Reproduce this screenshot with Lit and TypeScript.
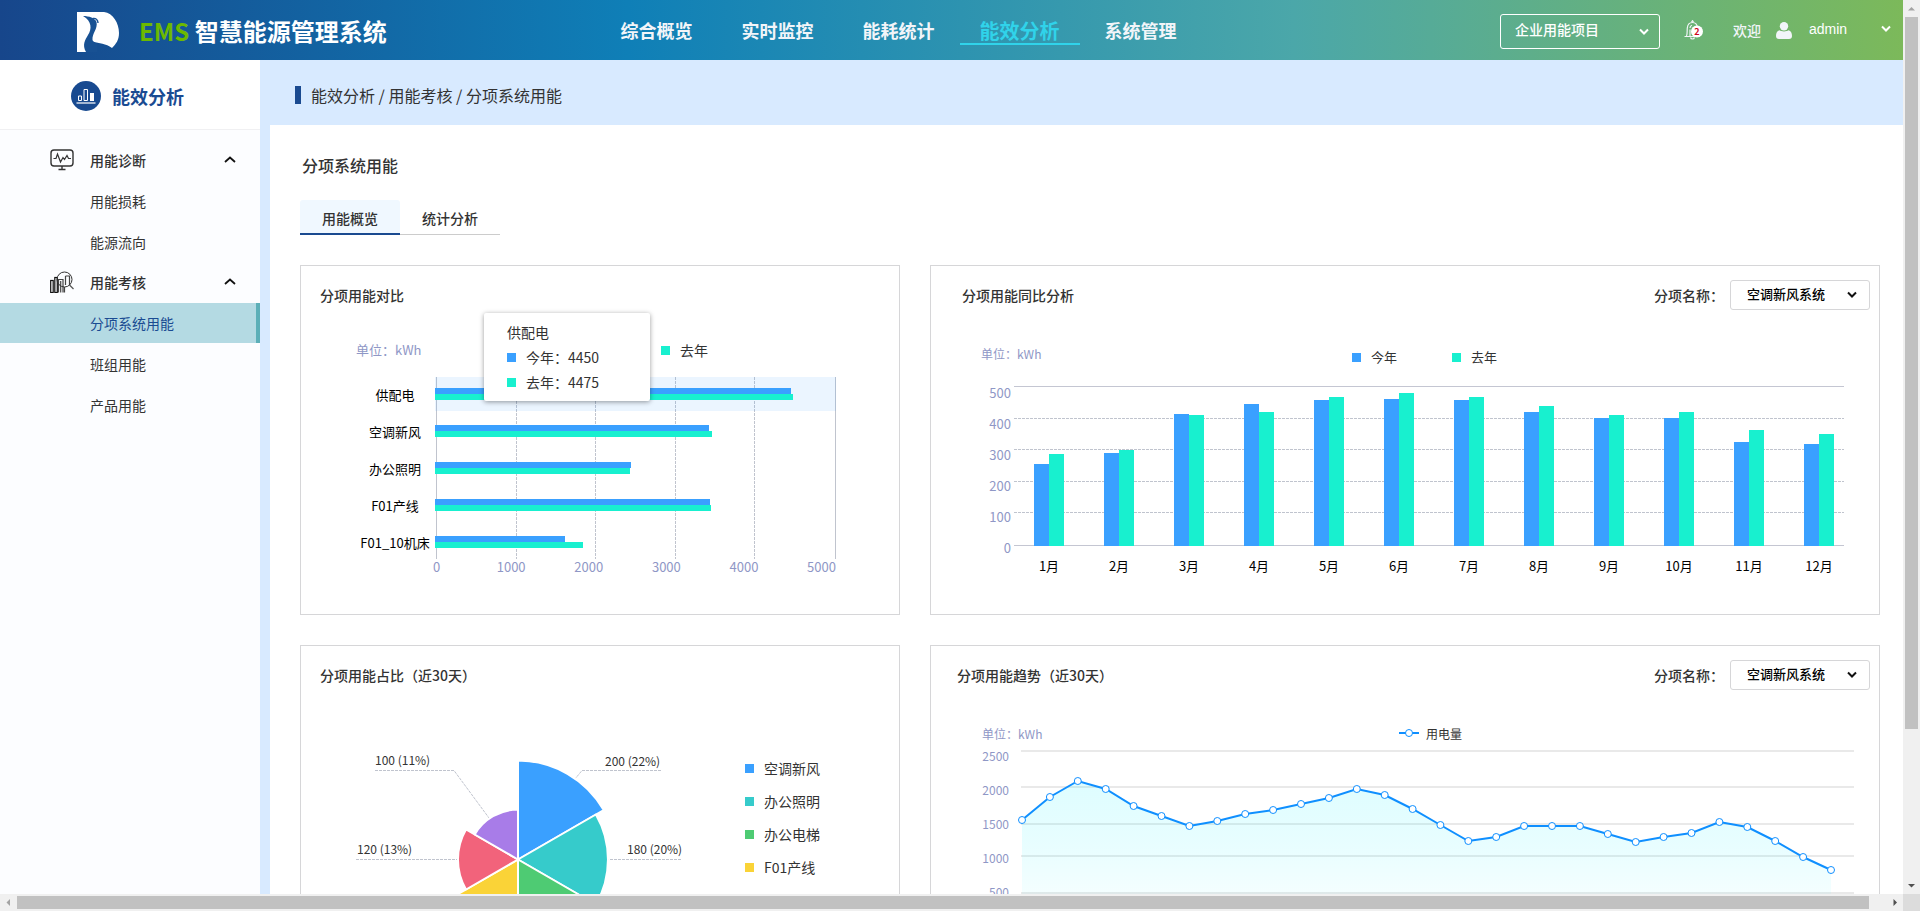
import { LitElement, html, svg, css } from "lit";
import { customElement, property } from "lit/decorators.js";
import { classMap } from "lit/directives/class-map.js";

const base = css`
  * {
    box-sizing: border-box;
  }
  ul,
  ol,
  h1,
  h2,
  p {
    margin: 0;
    padding: 0;
    list-style: none;
    font-size: inherit;
    font-weight: inherit;
  }
  a {
    color: inherit;
    text-decoration: none;
  }
  button,
  select {
    font: inherit;
    color: inherit;
    background: none;
    border: 0;
    margin: 0;
    padding: 0;
    cursor: pointer;
  }
  svg {
    display: block;
    flex: none;
  }
  .swatch {
    width: 9px;
    height: 9px;
    flex: none;
  }
  .swatch.now,
  .bar.now {
    background: #3aa0ff;
  }
  .swatch.last,
  .bar.last {
    background: #18f0cf;
  }
`;

/* ---------- header ---------- */

@customElement("app-header")
class AppHeader extends LitElement {
  static styles = [
    base,
    css`
      :host {
        display: grid;
        grid-template-columns: 596fr 605fr 702fr;
        align-items: center;
        height: 60px;
        color: #f2f5f9;
        background: linear-gradient(90deg, #17468b 0%, #0f7fb7 33%, #4ba7a9 68%, #7cb95a 100%);
      }
      .brand {
        display: flex;
        align-items: center;
        gap: 20px;
        padding: 4px 0 0 77px;
      }
      .name {
        font-size: 24px;
        line-height: 36px;
        font-weight: 700;
        color: #fff;
        white-space: nowrap;
        padding-bottom: 2px;
      }
      .ems {
        color: #6cb900;
      }
      .nav {
        display: grid;
        grid-template-columns: repeat(5, 1fr);
      }
      .nav a {
        justify-self: center;
        width: 120px;
        height: 30px;
        text-align: center;
        font-size: 18px;
        font-weight: 700;
        border-bottom: 2px solid transparent;
        line-height: 30px;
      }
      .nav a.on {
        font-size: 20px;
        line-height: 32px;
        color: #30d3ea;
        border-color: #30d3ea;
      }
      .tools {
        display: flex;
        align-items: center;
        justify-content: flex-end;
        padding-right: 11px;
        font-size: 14px;
        line-height: 20px;
      }
      .project {
        display: grid;
        align-items: center;
        width: 160px;
        margin: 3px 24px 0 0;
      }
      .project select,
      .project svg {
        grid-area: 1 / 1;
      }
      .project select {
        appearance: none;
        height: 35px;
        padding: 0 30px 5px 14px;
        border: 1px solid #fff;
        border-radius: 3px;
        font-weight: 500;
        color: #fff;
      }
      .project svg {
        justify-self: end;
        margin-right: 10px;
        pointer-events: none;
      }
      .welcome {
        margin: 0 15px 0 30px;
        font-weight: 500;
      }
      .user {
        display: flex;
        align-items: center;
        justify-content: space-between;
        width: 83px;
        margin-left: 17px;
        padding-bottom: 2px;
        font-family: "Liberation Sans", sans-serif;
        font-size: 14px;
        color: #fff;
      }
    `,
  ];

  private items = ["综合概览", "实时监控", "能耗统计", "能效分析", "系统管理"];

  private chevron() {
    return html`<svg width="12" height="8" viewBox="0 0 12 8" fill="none" stroke="#fff" stroke-width="2">
      <path d="M2 1.5 6 5.5 10 1.5" />
    </svg>`;
  }

  render() {
    return html`
      <div class="brand">
        <svg width="42" height="40" viewBox="0 0 42 40">
          <path fill="#fff" d="M0 0H27C36 1 42 11 42 21C42 28 39 32 35 36C29 31 22 32 16 29.5L9 40H0Z" />
          <path
            fill="#185193"
            d="M6 4C12 4 18 6 19.5 10C21 17 15 21 15.5 28C16 30 18 31 20 31.5L20 40H9C5 33 8 28 11 23C15 17 15 9 6 4Z"
          />
          <path fill="none" stroke="#185193" stroke-width="1.4" d="M16 6.5C19 6 21 8 21 11" />
        </svg>
        <h1 class="name"><span class="ems">EMS</span> 智慧能源管理系统</h1>
      </div>
      <nav class="nav">
        ${this.items.map((t, i) => html`<a href="#" class=${classMap({ on: i === 3 })}>${t}</a>`)}
      </nav>
      <div class="tools">
        <div class="project">
          <select aria-label="项目">
            <option>企业用能项目</option>
          </select>
          ${this.chevron()}
        </div>
        <button aria-label="消息">
          <svg width="19" height="20" viewBox="0 0 19 20">
            <g fill="none" stroke="#f2f5f9" stroke-width="1.2">
              <path d="M.5 16.5H16M2.5 16C3.5 14 3 11 3.3 8C3.6 4.5 6 2.5 8.5 2.5S13.2 4.5 13.5 8V16M6 8C6 6.500 7 5.500 8 5.200M6 16V9.500" />
              <path d="M6.500 17.500C7 19.500 10 19.500 10.500 17.500M7.500 2 8.500 .7 9.500 2" />
            </g>
            <circle cx="13" cy="11.500" r="6" fill="#fff" />
            <text x="13" y="14.500" font-size="9" font-weight="700" fill="#d0021b" text-anchor="middle">2</text>
          </svg>
        </button>
        <span class="welcome">欢迎</span>
        <svg width="16" height="17" viewBox="0 0 16 17" fill="#f2f5f9">
          <circle cx="8" cy="4.200" r="4.200" />
          <path d="M3.500 8.300C5 9.800 11 9.800 12.500 8.300C15 9 16 11 16 14C16 16 15 17 13 17H3C1 17 0 16 0 14C0 11 1 9 3.500 8.300Z" />
        </svg>
        <button class="user"><span>admin</span>${this.chevron()}</button>
      </div>
    `;
  }
}

/* ---------- sidebar ---------- */

@customElement("side-menu")
class SideMenu extends LitElement {
  static styles = [
    base,
    css`
      :host {
        display: block;
        background: #fcfdff;
        color: #333;
        font-size: 14px;
      }
      .title {
        display: flex;
        align-items: center;
        gap: 11px;
        height: 70px;
        padding: 2px 0 0 71px;
        background: #fff;
        border-bottom: 1px solid #f0f0f2;
        font-size: 18px;
        font-weight: 700;
        color: #1a4b92;
      }
      .menu {
        padding-top: 10px;
      }
      .group {
        display: grid;
        grid-template-columns: 40px 1fr 12px;
        align-items: center;
        width: 100%;
        height: 40px;
        padding: 0 24px 0 50px;
        text-align: left;
        font-weight: 500;
      }
      .leaf {
        display: block;
        height: 40px;
        margin-top: 1px;
        padding-left: 90px;
        line-height: 40px;
      }
      .leaf.on {
        background: #b4dae3;
        border-right: 4px solid #5cafb8;
        color: #1a4b92;
      }
    `,
  ];

  private monitor = html`<svg width="24" height="22" viewBox="0 0 24 22" fill="none" stroke="#333" stroke-width="1.4">
    <rect x="1" y="1" width="22" height="16" rx="3" />
    <path d="M12 17V20.500M8.500 20.500H15.500" />
    <path d="M3.500 9.500H6L7.500 5 10.500 13 13 8.500 14.500 10.500 17 6.500 18.500 9.500H21" stroke-width="1.200" />
  </svg>`;

  private assess = html`<svg width="24" height="22" viewBox="0 0 24 22" fill="none" stroke="#111" stroke-width="1.200">
    <rect x=".7" y="9.500" width="2.500" height="12" />
    <rect x="4.800" y="6.500" width="2.500" height="15" />
    <path d="M8.500 21.500V8.500H13V21.500M10.700 10V21.500M14.500 21.500V16M15.500 5V14M15.500 5H19.500V14" stroke="#444" />
    <circle cx="14.500" cy="8.500" r="7.500" stroke="#333" stroke-width="1" />
    <path d="M19.500 14 23.500 18" stroke="#555" />
  </svg>`;

  private groups = [
    { name: "用能诊断", icon: this.monitor, items: ["用能损耗", "能源流向"] },
    { name: "用能考核", icon: this.assess, items: ["分项系统用能", "班组用能", "产品用能"] },
  ];

  render() {
    return html`
      <div class="title">
        <svg width="30" height="30" viewBox="0 0 30 30">
          <circle cx="15" cy="15" r="15" fill="#184a90" />
          <path d="M7.500 19.500V15H10.500V19.500ZM13 19.500V8.500H16.500V19.500Z" fill="none" stroke="#fff" />
          <rect x="19" y="12" width="4" height="8" fill="#fff" />
          <rect x="5.500" y="21" width="19" height="2" fill="#a3b7d3" />
        </svg>
        能效分析
      </div>
      <nav class="menu">
        ${this.groups.map(
          (g) => html`
            <button class="group" aria-expanded="true">
              ${g.icon}<span>${g.name}</span>
              <svg width="12" height="8" viewBox="0 0 12 8" fill="none" stroke="#111" stroke-width="1.800">
                <path d="M1 6 6 1.500 11 6" />
              </svg>
            </button>
            <ul>
              ${g.items.map(
                (t) => html`<li><a href="#" class=${classMap({ leaf: true, on: t === "分项系统用能" })}>${t}</a></li>`
              )}
            </ul>
          `
        )}
      </nav>
    `;
  }
}

/* ---------- card frame ---------- */

@customElement("chart-card")
class ChartCard extends LitElement {
  static styles = [
    base,
    css`
      :host {
        display: block;
        position: relative;
        min-height: 350px;
        border: 1px solid #d6d6d8;
        background: #fff;
      }
      .head {
        display: flex;
        align-items: center;
        height: 44px;
        padding: 14px 9px 0 19px;
        font-size: 14px;
        font-weight: 500;
        color: #333;
      }
      .head.wide {
        padding-left: 31px;
      }
      .head.mid {
        padding-left: 26px;
      }
      .head h2 {
        flex: 1;
      }
      .head label {
        margin-right: 6px;
      }
      .pick {
        display: grid;
        align-items: center;
        width: 140px;
      }
      .pick select,
      .pick svg {
        grid-area: 1 / 1;
      }
      .pick select {
        appearance: none;
        height: 30px;
        padding: 0 28px 3px 16px;
        border: 1px solid #d6d6d8;
        border-radius: 3px;
        font-size: 13px;
        font-weight: 500;
        color: #000;
      }
      .pick svg {
        justify-self: end;
        margin-right: 12px;
        pointer-events: none;
      }
    `,
  ];

  @property() heading = "";
  @property() inset = "";
  @property({ type: Boolean }) filter = false;

  render() {
    return html`
      <div class=${classMap({ head: true, wide: this.inset === "wide", mid: this.inset === "mid" })}>
        <h2>${this.heading}</h2>
        ${this.filter
          ? html`<label for="item">分项名称：</label>
              <div class="pick">
                <select id="item">
                  <option>空调新风系统</option>
                </select>
                <svg width="12" height="8" viewBox="0 0 12 8" fill="none" stroke="#111" stroke-width="2">
                  <path d="M2 1.500 6 5.500 10 1.500" />
                </svg>
              </div>`
          : ""}
      </div>
      <slot></slot>
    `;
  }
}

/* ---------- horizontal comparison ---------- */

@customElement("compare-chart")
class CompareChart extends LitElement {
  static styles = [
    base,
    css`
      :host {
        display: block;
        padding: 30px 63px 0 54px;
        font-size: 14px;
        color: #333;
      }
      .top {
        display: grid;
        grid-template-columns: 305px 100px;
        padding-left: 1px;
        line-height: 20px;
      }
      .unit {
        font-size: 13px;
        color: #8f97c6;
      }
      .key {
        display: flex;
        align-items: center;
        gap: 10px;
      }
      .chart {
        display: grid;
        grid-template-columns: 80px 1fr;
        margin-top: 17px;
      }
      .names,
      .rows {
        display: grid;
        gap: 3px;
      }
      .names li {
        height: 34px;
        line-height: 35px;
        text-align: center;
        font-size: 13px;
        color: #000;
        white-space: nowrap;
      }
      .plot {
        display: grid;
      }
      .rows,
      .lines {
        grid-area: 1 / 1;
      }
      .lines {
        display: grid;
        grid-template-columns: repeat(5, 1fr);
        margin-left: 1px;
        border-left: 1px solid #c0c4ce;
        border-right: 1px solid #c0c4ce;
      }
      .lines i:not(:last-child) {
        background: repeating-linear-gradient(#c0c4ce 0 3px, transparent 3px 4px) right / 1px 100% no-repeat;
      }
      .row {
        height: 34px;
        padding: 11px 0;
      }
      .row.hover {
        background: rgba(58, 160, 255, 0.1);
      }
      .bar {
        height: 6px;
      }
      .axis {
        grid-column: 2;
        display: grid;
        grid-template-columns: 15px repeat(5, 1fr);
        margin-left: -2px;
        line-height: 16px;
        font-size: 13px;
        color: #8f97c6;
      }
      .axis li:not(:first-child) {
        text-align: right;
      }
      .tip {
        position: absolute;
        left: 183px;
        top: 47px;
        width: 166px;
        padding: 7px 23px 6px;
        background: #fff;
        border-radius: 2px;
        box-shadow: 0 1px 5px rgba(0, 0, 0, 0.4);
        line-height: 25px;
      }
    `,
  ];

  private data = [
    { name: "供配电", now: 356, last: 358 },
    { name: "空调新风", now: 274, last: 277 },
    { name: "办公照明", now: 196, last: 195 },
    { name: "F01产线", now: 275, last: 276 },
    { name: "F01_10机床", now: 130, last: 148 },
  ];

  render() {
    const pct = (v: number) => `width:${(v / 401) * 100}%`;
    return html`
      <div class="top">
        <span class="unit">单位：kWh</span>
        <span class="key"><i class="swatch last"></i>去年</span>
      </div>
      <div class="chart">
        <ul class="names">
          ${this.data.map((d) => html`<li>${d.name}</li>`)}
        </ul>
        <div class="plot">
          <div class="lines"><i></i><i></i><i></i><i></i><i></i></div>
          <div class="rows">
            ${this.data.map(
              (d, i) => html`<div class=${classMap({ row: true, hover: i === 0 })}>
                <div class="bar now" style=${pct(d.now)}></div>
                <div class="bar last" style=${pct(d.last)}></div>
              </div>`
            )}
          </div>
        </div>
        <ul class="axis">
          ${[0, 1000, 2000, 3000, 4000, 5000].map((n) => html`<li>${n}</li>`)}
        </ul>
      </div>
      <div class="tip">
        <p>供配电</p>
        <p class="key"><i class="swatch now"></i>今年：4450</p>
        <p class="key"><i class="swatch last"></i>去年：4475</p>
      </div>
    `;
  }
}

/* ---------- monthly columns ---------- */

@customElement("month-chart")
class MonthChart extends LitElement {
  static styles = [
    base,
    css`
      :host {
        display: block;
        padding-top: 34px;
        color: #333;
      }
      .top {
        display: grid;
        grid-template-columns: 371fr 100px 100px 327fr;
        height: 23px;
        padding-left: 50px;
        line-height: 20px;
      }
      .unit {
        font-size: 12px;
        color: #8f97c6;
      }
      .key {
        display: flex;
        align-items: center;
        align-self: end;
        gap: 10px;
        font-size: 13px;
      }
      .chart {
        display: grid;
        grid-template-columns: 30px 1fr;
        column-gap: 3px;
        margin-top: 19px;
        padding: 0 35px 0 50px;
      }
      .scale {
        grid-row: 1 / 3;
        margin-top: -9px;
        text-align: right;
        font-size: 13px;
        line-height: 31px;
        color: #8f97c6;
      }
      .plot {
        display: grid;
        height: 160px;
      }
      .lines,
      .cols {
        grid-area: 1 / 1;
      }
      .lines {
        display: grid;
        grid-template-rows: repeat(5, 1fr);
        border-top: 1px solid #c4c6d2;
        border-bottom: 1px solid #c4c6d2;
      }
      .lines i:not(:last-child) {
        background: repeating-linear-gradient(90deg, #c0c4ce 0 3px, transparent 3px 4px) bottom / 100% 1px no-repeat;
      }
      .cols,
      .months {
        display: flex;
        justify-content: space-between;
        padding: 0 10px 0 20px;
      }
      .col {
        display: flex;
        align-items: flex-end;
        width: 30px;
      }
      .bar {
        flex: 1;
      }
      .months {
        grid-column: 2;
        margin-top: 10px;
        font-size: 13px;
        line-height: 20px;
        color: #000;
      }
      .months li {
        width: 30px;
        text-align: center;
        white-space: nowrap;
      }
    `,
  ];

  private data = [
    [82, 92],
    [93, 96],
    [132, 131],
    [142, 134],
    [146, 149],
    [147, 153],
    [146, 149],
    [134, 140],
    [128, 131],
    [128, 134],
    [104, 116],
    [102, 112],
  ];

  render() {
    const pct = (v: number) => `height:${(v / 160) * 100}%`;
    return html`
      <div class="top">
        <span class="unit">单位：kWh</span>
        <span class="key"><i class="swatch now"></i>今年</span>
        <span class="key"><i class="swatch last"></i>去年</span>
      </div>
      <div class="chart">
        <ul class="scale">
          ${[500, 400, 300, 200, 100, 0].map((n) => html`<li>${n}</li>`)}
        </ul>
        <div class="plot">
          <div class="lines"><i></i><i></i><i></i><i></i><i></i></div>
          <div class="cols">
            ${this.data.map(
              ([a, b]) => html`<div class="col">
                <div class="bar now" style=${pct(a)}></div>
                <div class="bar last" style=${pct(b)}></div>
              </div>`
            )}
          </div>
        </div>
        <ul class="months">
          ${this.data.map((_, i) => html`<li>${i + 1}月</li>`)}
        </ul>
      </div>
    `;
  }
}

/* ---------- rose chart ---------- */

@customElement("share-chart")
class ShareChart extends LitElement {
  static styles = [
    base,
    css`
      :host {
        display: flex;
        gap: 25px;
        padding: 40px 0 0 19px;
        color: #333;
      }
      .rose text {
        font-size: 12px;
        fill: #333;
      }
      .lead {
        fill: none;
        stroke: #c0c4ce;
        stroke-dasharray: 3 1;
      }
      .slice {
        stroke: #fff;
        stroke-width: 2;
      }
      .legend {
        padding-top: 22px;
        font-size: 14px;
        line-height: 33px;
      }
      .legend li {
        display: flex;
        align-items: center;
        gap: 10px;
      }
      .c0 {
        background: #3aa0ff;
        fill: #3aa0ff;
      }
      .c1 {
        background: #36cbcb;
        fill: #36cbcb;
      }
      .c2 {
        background: #4ecb73;
        fill: #4ecb73;
      }
      .c3 {
        background: #fad337;
        fill: #fad337;
      }
      .c4 {
        background: #f2637b;
        fill: #f2637b;
      }
      .c5 {
        background: #a87ce8;
        fill: #a87ce8;
      }
    `,
  ];

  private radii = [99, 90, 80, 70, 60, 50];
  private names = ["空调新风", "办公照明", "办公电梯", "F01产线"];

  private slice(r: number, i: number) {
    const at = (deg: number) => {
      const a = (deg * Math.PI) / 180;
      return `${(198 + r * Math.sin(a)).toFixed(1)} ${(129.5 - r * Math.cos(a)).toFixed(1)}`;
    };
    return svg`<path class="slice c${i}" d="M198 129.5L${at(i * 60)}A${r} ${r} 0 0 1 ${at(i * 60 + 60)}Z" />`;
  }

  render() {
    return html`
      <svg class="rose" width="400" height="230" viewBox="0 0 400 230">
        <path class="lead" d="M55 40.500H134L169 88" />
        <path class="lead" d="M341 40.500H262L255 49" />
        <path class="lead" d="M36 129.500H140M286 129.500H362" />
        ${this.radii.map((r, i) => this.slice(r, i))}
        <text x="55" y="35">100 (11%)</text>
        <text x="285" y="36">200 (22%)</text>
        <text x="37" y="124">120 (13%)</text>
        <text x="307" y="124">180 (20%)</text>
      </svg>
      <ul class="legend">
        ${this.names.map((n, i) => html`<li><i class="swatch c${i}"></i>${n}</li>`)}
      </ul>
    `;
  }
}

/* ---------- trend line ---------- */

@customElement("trend-chart")
class TrendChart extends LitElement {
  static styles = [
    base,
    css`
      :host {
        display: block;
        padding: 34px 25px 0 51px;
        font-size: 12px;
        color: #333;
      }
      .top {
        display: grid;
        grid-template-columns: 417fr 455fr;
        line-height: 20px;
      }
      .unit,
      .scale {
        color: #8f97c6;
      }
      .key {
        display: flex;
        align-items: center;
        gap: 7px;
      }
      .chart {
        display: grid;
        grid-template-columns: 27px 1fr;
        column-gap: 5px;
      }
      .scale {
        margin-top: -5px;
        text-align: right;
        line-height: 34px;
      }
      .plot {
        width: 100%;
        height: auto;
      }
      .rule {
        stroke: #e9e9e9;
        stroke-width: 2;
      }
      .line {
        fill: none;
        stroke: #0f8fff;
        stroke-width: 2;
      }
      .dot {
        fill: #fff;
        stroke: #0f8fff;
        stroke-width: 1;
      }
    `,
  ];

  private ys = [
    820, 797, 781, 789, 806, 816, 826, 821, 814, 810, 804, 798, 789, 795, 809, 825, 841, 837, 826, 826, 826, 834, 842,
    837, 833, 822, 827, 841, 857, 870,
  ];

  render() {
    const pts = this.ys.map((y, i) => [8 + (i * 809) / 29, y - 744]);
    const line = pts.map(([x, y]) => `${x.toFixed(1)},${y}`).join(" ");
    return html`
      <div class="top">
        <span class="unit">单位：kWh</span>
        <span class="key">
          <svg width="20" height="10" viewBox="0 0 20 10">
            <path class="line" d="M0 4H20" />
            <circle class="dot" cx="10" cy="4" r="3.500" />
          </svg>
          用电量
        </span>
      </div>
      <div class="chart">
        <ul class="scale">
          ${[2500, 2000, 1500, 1000, 500].map((n) => html`<li>${n}</li>`)}
        </ul>
        <svg class="plot" viewBox="0 0 840 190">
          <defs>
            <linearGradient id="fade" x1="0" y1="0" x2="0" y2="1">
              <stop offset="0" stop-color="#00f0ff" stop-opacity=".13" />
              <stop offset=".45" stop-color="#00f0ff" stop-opacity=".09" />
              <stop offset="1" stop-color="#00f0ff" stop-opacity=".01" />
            </linearGradient>
          </defs>
          ${[7, 43, 80, 112, 149, 184].map((y) => svg`<path class="rule" d="M7 ${y}H840" />`)}
          <polygon fill="url(#fade)" points="8,184 ${line} 817,184" />
          <polyline class="line" points=${line} />
          ${pts.map(([x, y]) => svg`<circle class="dot" cx=${x.toFixed(1)} cy=${y} r="3.5" />`)}
        </svg>
      </div>
    `;
  }
}

/* ---------- page ---------- */

@customElement("app-root")
class AppRoot extends LitElement {
  static styles = [
    base,
    css`
      :host {
        display: grid;
        grid-template: minmax(0, 1fr) 17px / minmax(0, 1fr) 17px;
        height: 100vh;
        font-family: "Noto Sans CJK SC", "Noto Sans", sans-serif;
        color: #333;
        background: #fff;
      }
      .view {
        overflow: auto;
        scrollbar-width: none;
      }
      .body {
        display: grid;
        grid-template-columns: 260px minmax(0, 1fr);
        background: #d8eaff;
      }
      .crumbs {
        display: flex;
        align-items: center;
        gap: 10px;
        height: 65px;
        padding: 5px 0 0 35px;
        font-size: 16px;
        line-height: 20px;
      }
      .crumbs::before {
        content: "";
        width: 6px;
        height: 18px;
        background: #1a4a90;
      }
      .page {
        margin-left: 10px;
        padding: 30px 23px 30px 30px;
        background: #fff;
      }
      .page h1 {
        padding-left: 2px;
        font-size: 16px;
        font-weight: 500;
        line-height: 20px;
      }
      .tabs {
        display: flex;
        margin: 25px 0 30px;
      }
      .tabs button {
        width: 100px;
        height: 35px;
        padding-top: 2px;
        border-bottom: 1px solid #ccc;
        font-size: 14px;
        font-weight: 500;
      }
      .tabs button.on {
        background: #f0f8ff;
        border-bottom: 2px solid #1a4a90;
        border-radius: 3px 3px 0 0;
      }
      .cards {
        display: grid;
        grid-template-columns: minmax(0, 600fr) minmax(0, 950fr);
        gap: 30px;
      }
      .track {
        display: flex;
        background: #f0f0f0;
      }
      .track.v {
        flex-direction: column;
      }
      .track button {
        display: grid;
        place-items: center;
        width: 17px;
        height: 17px;
        flex: none;
      }
      .track .rail {
        flex: 1;
        padding: 0 2px;
      }
      .track.h .rail {
        padding: 2px 0;
      }
      .thumb {
        background: #c1c1c1;
      }
      .v .thumb {
        height: 82.8%;
      }
      .h .thumb {
        width: 99.1%;
        height: 13px;
      }
      .corner {
        background: #dcdcdc;
      }
    `,
  ];

  private arrow(d: string, fill: string, label: string) {
    return html`<button aria-label=${label}>
      <svg width="9" height="9" viewBox="0 0 9 9"><path d=${d} fill=${fill} /></svg>
    </button>`;
  }

  render() {
    return html`
      <div class="view">
        <app-header></app-header>
        <div class="body">
          <side-menu></side-menu>
          <main>
            <div class="crumbs">能效分析 / 用能考核 / 分项系统用能</div>
            <section class="page">
              <h1>分项系统用能</h1>
              <div class="tabs" role="tablist">
                <button class="on" role="tab" aria-selected="true">用能概览</button>
                <button role="tab" aria-selected="false">统计分析</button>
              </div>
              <div class="cards">
                <chart-card heading="分项用能对比"><compare-chart></compare-chart></chart-card>
                <chart-card heading="分项用能同比分析" inset="wide" filter><month-chart></month-chart></chart-card>
                <chart-card heading="分项用能占比（近30天）"><share-chart></share-chart></chart-card>
                <chart-card heading="分项用能趋势（近30天）" inset="mid" filter><trend-chart></trend-chart></chart-card>
              </div>
            </section>
          </main>
        </div>
      </div>
      <div class="track v">
        ${this.arrow("M1 6.500 4.500 3 8 6.500Z", "#a3a3a3", "向上")}
        <div class="rail"><div class="thumb"></div></div>
        ${this.arrow("M1 3 4.500 6.500 8 3Z", "#505050", "向下")}
      </div>
      <div class="track h">
        ${this.arrow("M6 1 2.500 4.500 6 8Z", "#a3a3a3", "向左")}
        <div class="rail"><div class="thumb"></div></div>
        ${this.arrow("M3.500 1 7 4.500 3.500 8Z", "#505050", "向右")}
      </div>
      <div class="corner"></div>
    `;
  }
}
